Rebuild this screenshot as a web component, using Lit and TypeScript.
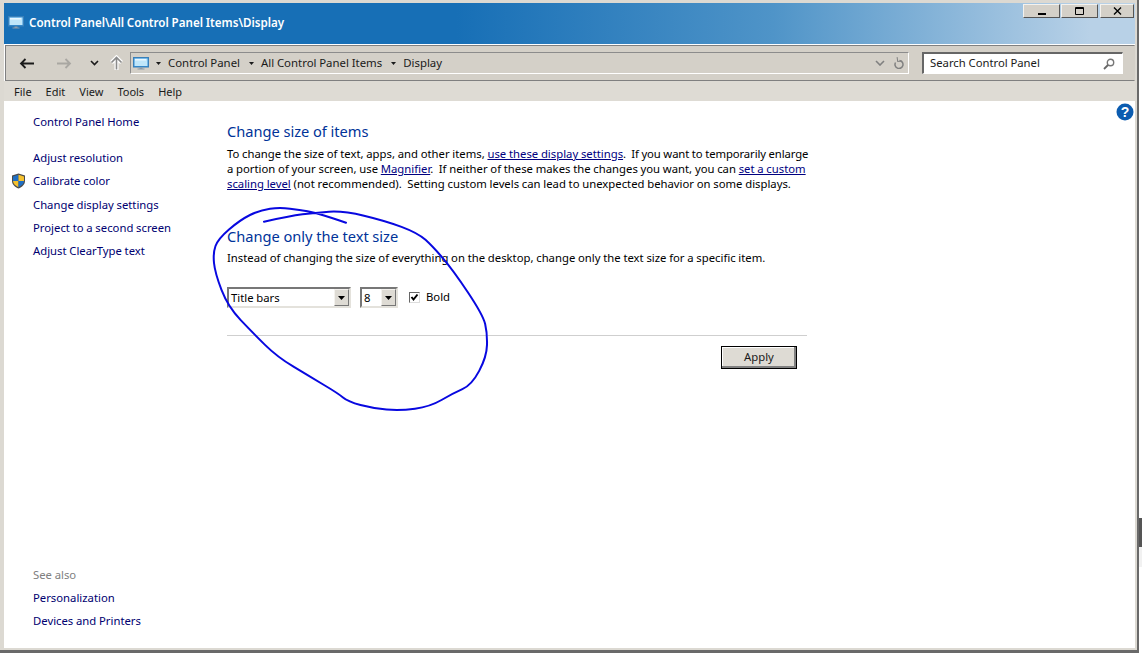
import {LitElement, html, css, svg} from 'lit';
import {customElement} from 'lit/decorators.js';

// hand-traced pen stroke, in page coordinates
const INK: number[][] = [
  [264, 221.7], [290, 216], [315, 212.7], [343, 210.7], [385, 220.7], [418, 233], [433, 246.7], [453, 270],
  [483, 315], [487.3, 333], [486.7, 356.7], [471.7, 385], [453, 393.3], [430, 406.7], [400, 410.7],
  [373, 408.3], [348, 401.7], [338, 393.3], [310, 376.7], [277, 356.7], [253, 333], [228, 306.7],
  [215, 273], [213, 253], [218, 239], [240, 220], [260, 210], [280, 207.3], [300, 210], [315, 212.7],
  [333, 218.3], [346, 222.7],
];

function smooth(pts: number[][]) {
  let d = `M${pts[0][0]} ${pts[0][1]}`;
  for (let i = 1; i < pts.length - 1; i++) {
    const mx = (pts[i][0] + pts[i + 1][0]) / 2;
    const my = (pts[i][1] + pts[i + 1][1]) / 2;
    d += `Q${pts[i][0]} ${pts[i][1]} ${mx} ${my}`;
  }
  const last = pts[pts.length - 1];
  return d + `L${last[0]} ${last[1]}`;
}

const monitor = (w: number, h: number) => html`
  <svg width=${w} height=${h} viewBox="0 0 16 13">
    <rect x="0.5" y="0.5" width="15" height="9.5" fill="#2f8fd8" stroke="#3a7fb8"/>
    <rect x="1.5" y="1.5" width="13" height="7.5" fill="#bfe6fa"/>
    <path d="M2 2h11v1.5H2z" fill="#e8f7ff"/>
    <path d="M6.5 10.5h3v1h2v1h-7v-1h2z" fill="#8a9aa8"/>
  </svg>`;

const tri = html`<svg class="tri" width="5" height="3" viewBox="0 0 5 3"><path d="M0 0h5L2.5 3z" fill="#1a1a1a"/></svg>`;

const comboArrow = html`<span class="drop"><svg width="7" height="4" viewBox="0 0 7 4"><path d="M0 0h7L3.5 4z" fill="#000"/></svg></span>`;

@customElement('app-root')
export class AppRoot extends LitElement {
  static styles = css`
    :host {
      display: block;
      position: relative;
      width: 1142px;
      height: 653px;
      overflow: hidden;
      background: #fff;
      font-family: "Noto Sans", sans-serif;
      font-size: 11.3px;
      word-spacing: -0.2px;
      color: #000;
    }
    .screen {
      display: flex;
      height: 653px;
    }
    .window {
      width: 1139px;
      height: 653px;
      box-sizing: border-box;
      border-right: 2px solid #696969;
      border-bottom: 3px solid #696969;
      flex: none;
    }
    .inner {
      height: 100%;
      box-sizing: border-box;
      border: solid #dcd9d2;
      border-width: 3px 2px 2px 4px;
      display: flex;
      flex-direction: column;
    }
    .edge {
      flex: 1;
      padding-top: 518px;
    }
    .edge-dark {
      height: 29px;
      background: #555;
    }
    .edge-light {
      height: 20px;
      background: #f1f1f1;
    }

    .title {
      height: 41px;
      flex: none;
      display: flex;
      background: linear-gradient(90deg, #176fb6 0, #176fb6 40%, #4f94c8 68%, #b8d1e7 96%);
      color: #fff;
      font-size: 11.6px;
      font-weight: 600;
      padding: 1px 1px 0 4px;
      box-sizing: border-box;
    }
    .title-name {
      display: flex;
      align-items: center;
      gap: 5px;
      height: 37px;
      flex: 1;
    }
    .wbtns {
      display: flex;
      gap: 1px;
      height: 14px;
    }
    .wbtn {
      width: 37px;
      height: 14px;
      box-sizing: border-box;
      background: #d4d0c8;
      border: 1px solid;
      border-color: #f4f2ee #555 #555 #f4f2ee;
      display: flex;
      align-items: center;
      justify-content: center;
    }
    .wbtn.close {
      width: 34px;
      margin-left: 1px;
    }

    .toolbar {
      height: 36px;
      flex: none;
      box-sizing: border-box;
      margin: 1px 0 0 1px;
      background: #d4d0c8;
      border: 1px solid #808080;
      border-right-color: #d4d0c8;
      display: flex;
      align-items: center;
      padding-left: 13px;
    }
    .nav {
      display: flex;
      align-items: center;
      width: 111px;
      flex: none;
    }
    .address {
      width: 779px;
      height: 22px;
      flex: none;
      box-sizing: border-box;
      border: 1px solid;
      border-color: #8c8c8c #fff #fff #8c8c8c;
      display: flex;
      align-items: center;
      padding-left: 2px;
      color: #1a1a1a;
    }
    .crumb {
      display: flex;
      align-items: center;
      margin-bottom: 2px;
      font-size: 11.4px;
    }
    .tri {
      margin: 0 7px;
    }
    .crumb + .tri {
      margin-left: 9px;
    }
    .address-end {
      margin-left: auto;
      display: flex;
      align-items: center;
      gap: 8px;
      padding-right: 4px;
    }
    .search {
      width: 201px;
      height: 22px;
      flex: none;
      margin-left: 13px;
      box-sizing: border-box;
      background: #fff;
      border: 2px solid;
      border-color: #666 #fff #fff #666;
      border-right-width: 1px;
      border-bottom-width: 1px;
      display: flex;
      align-items: center;
      justify-content: space-between;
      padding: 0 7px 0 6px;
      color: #1a1a1a;
    }
    .search span {
      margin-bottom: 2px;
    }

    .menu {
      height: 20px;
      flex: none;
      background: #dedbd4;
      display: flex;
      align-items: center;
      gap: 14px;
      padding-left: 10px;
      font-size: 11px;
      color: #1a1a1a;
    }

    .body {
      flex: 1;
      display: flex;
      min-height: 0;
    }
    .side {
      width: 223px;
      flex: none;
      box-sizing: border-box;
      padding: 9px 0 16px;
      display: flex;
      flex-direction: column;
    }
    .row {
      height: 23.25px;
      display: flex;
      align-items: center;
      padding-left: 29px;
      color: #000070;
    }
    .row.home {
      margin-bottom: 13px;
    }
    .row.shield {
      padding-left: 7px;
      gap: 7px;
    }
    .row.shield span {
      margin-top: -1px;
    }
    .row.muted {
      margin-top: auto;
      color: #808080;
      padding-top: 1px;
      box-sizing: border-box;
    }
    .main {
      width: 580px;
      flex: none;
      padding-top: 19px;
    }
    h2 {
      margin: 0;
      font-size: 14.65px;
      line-height: 22px;
      font-weight: 400;
      color: #003399;
    }
    p {
      margin: 4px 0 34px;
      line-height: 15px;
      white-space: nowrap;
    }
    p.last {
      margin: 3px 0 0;
    }
    .tight {
      letter-spacing: -0.1px;
    }
    a {
      color: #000080;
      text-decoration: underline;
    }
    .controls {
      display: flex;
      align-items: center;
      margin-top: 22px;
      height: 21px;
    }
    .combo {
      height: 21px;
      box-sizing: border-box;
      border: 2px solid;
      border-color: #777 #e4e2dc #e4e2dc #777;
      display: flex;
      align-items: center;
      padding-left: 2px;
      background: #fff;
      position: relative;
    }
    .combo.wide {
      width: 124px;
    }
    .combo.small {
      width: 38px;
      margin-left: 9px;
    }
    .combo span.val {
      flex: 1;
    }
    .drop {
      width: 15px;
      height: 17px;
      box-sizing: border-box;
      background: #dedbd4;
      border: 1px solid;
      border-color: #f4f2ee #777 #777 #f4f2ee;
      display: flex;
      align-items: center;
      justify-content: center;
    }
    .check {
      width: 11px;
      height: 11px;
      margin-left: 11px;
      box-sizing: border-box;
      border: 1px solid;
      border-color: #666 #ddd #ddd #666;
      display: flex;
    }
    .check-label {
      margin-left: 6px;
      position: relative;
      top: -1px;
    }
    .sep {
      height: 1px;
      background: #cfcfcf;
      margin-top: 27px;
    }
    .actions {
      display: flex;
      justify-content: flex-end;
      padding: 10px 10px 0 0;
    }
    .apply {
      width: 76px;
      height: 23px;
      box-sizing: border-box;
      border: 1px solid #000;
      background: #dedbd4;
      box-shadow: inset -2px -2px 0 #808080, inset 1px 1px 0 #fff;
      font: inherit;
      color: #1a1a1a;
      padding: 0 0 2px;
    }
    .help {
      margin: 2px 0 0 auto;
      padding-right: 1px;
    }
    .ink {
      position: absolute;
      left: 0;
      top: 0;
      pointer-events: none;
    }
  `;

  render() {
    return html`
      <div class="screen">
        <div class="window">
          <div class="inner">
            <div class="title">
              <div class="title-name">
                ${monitor(16, 13)}
                <span>Control Panel\\All Control Panel Items\\Display</span>
              </div>
              <div class="wbtns">
                <div class="wbtn"><svg width="10" height="8" viewBox="0 0 10 8"><path d="M1 6h8v2H1z" fill="#000"/></svg></div>
                <div class="wbtn"><svg width="10" height="8" viewBox="0 0 10 8"><path d="M.5.5h8v7h-8z M.5 1.5h8" fill="none" stroke="#000"/></svg></div>
                <div class="wbtn close"><svg width="9" height="8" viewBox="0 0 9 8"><path d="M1 .5l7 7M8 .5l-7 7" fill="none" stroke="#000" stroke-width="1.4"/></svg></div>
              </div>
            </div>
            <div class="toolbar">
              <div class="nav">
                <svg width="15" height="11" viewBox="0 0 15 11" style="margin-right:23px"><path d="M15 5.5H2M6.5 1L2 5.5 6.5 10" fill="none" stroke="#1a1a1a" stroke-width="1.8"/></svg>
                <svg width="15" height="11" viewBox="0 0 15 11" style="margin-right:18px"><path d="M0 5.5h13M8.5 1L13 5.5 8.5 10" fill="none" stroke="#a9a7a2" stroke-width="1.8"/></svg>
                <svg width="9" height="6" viewBox="0 0 9 6" style="margin-right:10px"><path d="M1 1l3.5 3.5L8 1" fill="none" stroke="#1a1a1a" stroke-width="1.6"/></svg>
                <svg width="15" height="16" viewBox="0 0 15 16">
                  <path d="M7.5 15V3M2.500 7.500L7.500 2.500l5 5" fill="none" stroke="#fff" stroke-width="4"/>
                  <path d="M7.5 14.500V3M2.500 7.500L7.500 2.500l5 5" fill="none" stroke="#8a8a8a" stroke-width="1.600"/>
                </svg>
              </div>
              <div class="address">
                ${monitor(16, 13)}
                ${tri}
                <span class="crumb">Control Panel</span>${tri}
                <span class="crumb">All Control Panel Items</span>${tri}
                <span class="crumb">Display</span>
                <div class="address-end">
                  <svg width="10" height="6" viewBox="0 0 10 6"><path d="M1 1l4 4 4-4" fill="none" stroke="#808080" stroke-width="1.6"/></svg>
                  <svg width="11" height="12" viewBox="0 0 11 12"><path d="M6.5 2.5A4 4 0 1 1 2.5 4.5" fill="none" transform="translate(0 1)" stroke="#808080" stroke-width="1.5"/><path d="M4.5 0v4.5H9" fill="none" stroke="#808080" stroke-width="1" transform="rotate(-8 5 3)"/></svg>
                </div>
              </div>
              <div class="search">
                <span>Search Control Panel</span>
                <svg width="12" height="12" viewBox="0 0 12 12"><circle cx="7.5" cy="4.5" r="3.2" fill="#fff" stroke="#777" stroke-width="1.4"/><path d="M5 7L1 11" stroke="#666" stroke-width="1.8"/></svg>
              </div>
            </div>
            <div class="menu">
              <span>File</span><span>Edit</span><span>View</span><span>Tools</span><span>Help</span>
            </div>
            <div class="body">
              <div class="side">
                <div class="row home">Control Panel Home</div>
                <div class="row">Adjust resolution</div>
                <div class="row shield">
                  <svg width="15" height="16" viewBox="0 0 15 16">
                    <path d="M7.5 .5L14 2.5V8c0 3.5-3 6-6.5 7.5C4 14 1 11.500 1 8V2.500z" fill="#4a4a4a"/>
                    <path d="M7.500 1.800L2 3.400V8h5.500z" fill="#1f6fc4"/>
                    <path d="M7.500 1.800L13 3.400V8H7.500z" fill="#f5c12e"/>
                    <path d="M2 8h5.500v6.200C4.500 13 2.200 10.800 2 8z" fill="#f5c12e"/>
                    <path d="M13 8H7.500v6.200c3-1.200 5.300-3.400 5.500-6.200z" fill="#1f6fc4"/>
                  </svg>
                  <span>Calibrate color</span>
                </div>
                <div class="row">Change display settings</div>
                <div class="row">Project to a second screen</div>
                <div class="row">Adjust ClearType text</div>
                <div class="row muted">See also</div>
                <div class="row">Personalization</div>
                <div class="row">Devices and Printers</div>
              </div>
              <div class="main">
                <h2>Change size of items</h2>
                <p>To change the size of text, apps, and other items, <a>use these display settings</a><span class="tight">.&nbsp; If you want to temporarily enlarge</span><br>
                a portion of your screen, use <a>Magnifier</a>.&nbsp; If neither of these makes the changes you want, you can <a>set a custom</a><br>
                <a>scaling level</a> (not recommended).&nbsp; Setting custom levels can lead to unexpected behavior on some displays.</p>
                <h2>Change only the text size</h2>
                <p class="last">Instead of changing the size of everything on the desktop, change only the text size for a specific item.</p>
                <div class="controls">
                  <div class="combo wide"><span class="val">Title bars</span>${comboArrow}</div>
                  <div class="combo small"><span class="val">8</span>${comboArrow}</div>
                  <div class="check"><svg width="9" height="9" viewBox="0 0 9 9"><path d="M1.500 4l2 2.500 4-5" fill="none" stroke="#000" stroke-width="2"/></svg></div>
                  <span class="check-label">Bold</span>
                </div>
                <div class="sep"></div>
                <div class="actions"><button class="apply">Apply</button></div>
              </div>
              <div class="help">
                <svg width="18" height="18" viewBox="0 0 18 18">
                  <circle cx="9" cy="9" r="8.500" fill="#0b5cb0"/>
                  <text x="9" y="14" text-anchor="middle" font-family="Liberation Sans" font-weight="700" font-size="14" fill="#fff">?</text>
                </svg>
              </div>
            </div>
          </div>
        </div>
        <div class="edge"><div class="edge-dark"></div><div class="edge-light"></div></div>
      </div>
      <svg class="ink" width="1142" height="653" viewBox="0 0 1142 653">
        ${svg`<path d=${smooth(INK)} fill="none" stroke="#0808e0" stroke-width="2" stroke-linecap="round" stroke-linejoin="round"/>`}
      </svg>
    `;
  }
}
